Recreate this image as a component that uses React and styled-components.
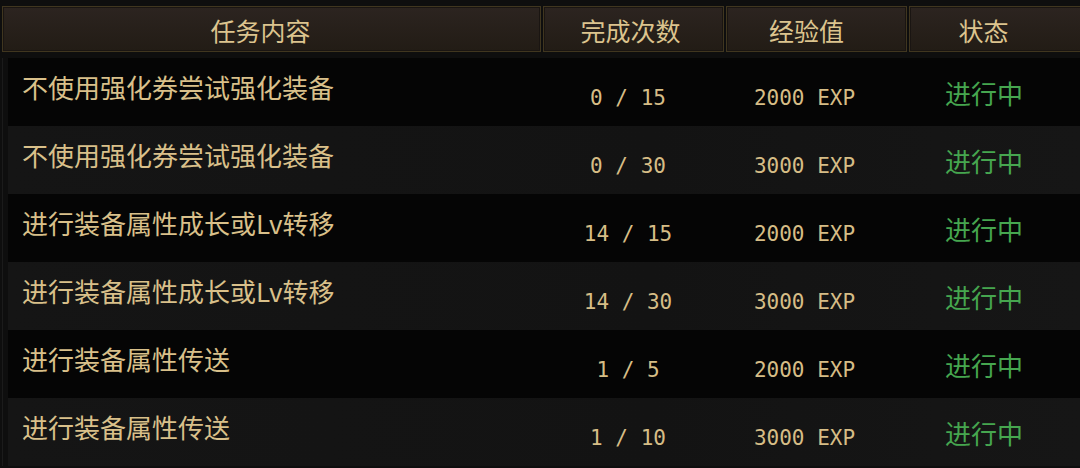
import React from 'react';
import styled, { createGlobalStyle } from 'styled-components';

const GlobalStyle = createGlobalStyle`
  html, body {
    margin: 0;
    padding: 0;
    background: #0e0e0e;
    overflow: hidden;
  }
`;

const Board = styled.div`
  width: 1080px;
  height: 468px;
  background: #0e0e0e;
  font-family: "Noto Sans CJK SC", "Noto Sans", sans-serif;
  padding-top: 6px;
  box-sizing: border-box;
  overflow: hidden;
`;

const HeaderBar = styled.div`
  display: grid;
  grid-template-columns: 539px 181px 181px 1fr;
  gap: 2px;
  padding-left: 2px;
  height: 46px;
  margin-right: -4px;
`;

const HeadCell = styled.div`
  display: flex;
  align-items: center;
  justify-content: center;
  box-sizing: border-box;
  padding-right: ${({ shift }) => shift || 0}px;
  padding-top: 2px;
  background: linear-gradient(#2c2420, #221c15);
  border: 1px solid #40361f;
  box-shadow: inset 0 0 0 1px #1a1512;
  color: #dcc48e;
  font-size: 25px;
  line-height: 25px;
`;

const Rows = styled.div`
  margin-top: 6px;
  display: flex;
  flex-direction: column;
  padding-left: 8px;
  border-left: 1px solid #1b1b1b;
  margin-left: 2px;
  padding-left: 5px;
`;

const Row = styled.div`
  display: grid;
  grid-template-columns: 533px 182px 183px 1fr;
  height: 68px;
  background: ${({ shade }) =>
    shade ? 'linear-gradient(90deg, #151515, #131313 60%, #161616)' : '#050505'};
`;

const Cell = styled.div`
  display: flex;
  align-items: flex-start;
  justify-content: ${({ left }) => (left ? 'flex-start' : 'center')};
  padding-left: ${({ left }) => (left ? 14 : 0)}px;
  padding-right: ${({ shift }) => shift || 0}px;
  padding-top: ${({ top }) => top}px;
  box-sizing: border-box;
  white-space: nowrap;
`;

const Title = styled.span`
  color: #d9c08a;
  font-size: 26px;
  line-height: 26px;
`;

const Count = styled.span`
  color: #d6bd86;
  font-family: "DejaVu Sans Mono", "Liberation Mono", monospace;
  font-size: 21px;
  line-height: 21px;
`;

const Status = styled.span`
  color: #46a64f;
  font-size: 26px;
  line-height: 26px;
`;

const tasks = [
  { name: '不使用强化券尝试强化装备', done: 0, total: 15, exp: 2000 },
  { name: '不使用强化券尝试强化装备', done: 0, total: 30, exp: 3000 },
  { name: '进行装备属性成长或Lv转移', done: 14, total: 15, exp: 2000 },
  { name: '进行装备属性成长或Lv转移', done: 14, total: 30, exp: 3000 },
  { name: '进行装备属性传送', done: 1, total: 5, exp: 2000 },
  { name: '进行装备属性传送', done: 1, total: 10, exp: 3000 },
];

export default function App() {
  return (
    <>
      <GlobalStyle />
      <Board>
        <HeaderBar>
          <HeadCell shift={22}>任务内容</HeadCell>
          <HeadCell shift={6}>完成次数</HeadCell>
          <HeadCell shift={20}>经验值</HeadCell>
          <HeadCell shift={26}>状态</HeadCell>
        </HeaderBar>
        <Rows>
          {tasks.map((t, i) => (
            <Row key={i} shade={i % 2 === 1}>
              <Cell left top={16}>
                <Title>{t.name}</Title>
              </Cell>
              <Cell shift={8} top={30}>
                <Count>{t.done} / {t.total}</Count>
              </Cell>
              <Cell shift={20} top={30}>
                <Count>{t.exp} EXP</Count>
              </Cell>
              <Cell shift={18} top={22}>
                <Status>进行中</Status>
              </Cell>
            </Row>
          ))}
        </Rows>
      </Board>
    </>
  );
}
